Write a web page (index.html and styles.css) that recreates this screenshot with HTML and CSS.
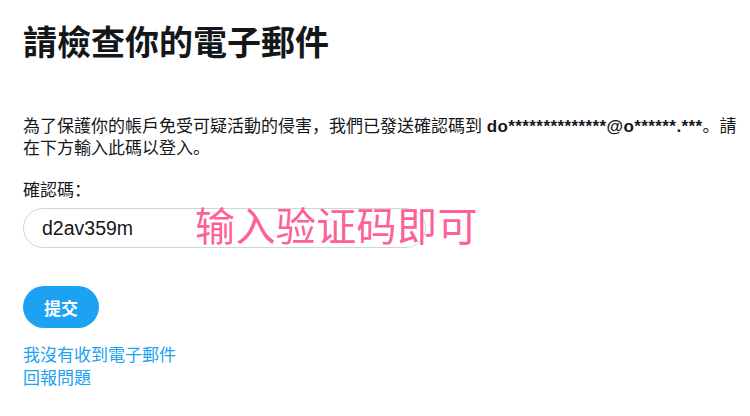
FILE: index.html
```html
<!DOCTYPE html>
<html lang="zh">
<head>
<meta charset="utf-8">
<link rel="stylesheet" href="styles.css">
</head>
<body>
<main class="page">
  <h1 class="title">請檢查你的電子郵件</h1>
  <p class="desc">為了保護你的帳戶免受可疑活動的侵害，我們已發送確認碼到 <strong>do**************@o******.***</strong>。請在下方輸入此碼以登入。</p>
  <form class="form">
    <label class="label" for="code">確認碼：</label>
    <div class="field">
      <input class="input" id="code" type="text" value="d2av359m">
      <span class="note">输入验证码即可</span>
    </div>
    <button class="submit" type="button">提交</button>
  </form>
  <nav class="links">
    <a class="link" href="#">我沒有收到電子郵件</a>
    <a class="link" href="#">回報問題</a>
  </nav>
</main>
</body>
</html>
```
FILE: styles.css
```css
html, body {
  margin: 0;
  padding: 0;
  background: #ffffff;
}
body {
  font-family: "Liberation Sans", "Noto Sans CJK SC", sans-serif;
  color: #14171a;
}
.page {
  padding: 23px 8px 0 23px;
  display: flex;
  flex-direction: column;
}
.title {
  margin: 0;
  font-size: 34px;
  line-height: 41px;
  font-weight: 700;
}
.desc {
  margin: 52px 0 0 0;
  font-size: 17px;
  line-height: 22px;
}
.desc strong {
  font-weight: 700;
  letter-spacing: 0.4px;
}
.form {
  margin-top: 20px;
  display: flex;
  flex-direction: column;
  align-items: flex-start;
}
.label {
  font-size: 17px;
  line-height: 22px;
}
.field {
  position: relative;
  margin-top: 6px;
}
.input {
  box-sizing: border-box;
  width: 403px;
  height: 40px;
  border: 1px solid #ccd6dd;
  border-radius: 20px;
  padding: 0 18px;
  font-family: "Liberation Sans", sans-serif;
  font-size: 19.5px;
  color: #14171a;
  background: #fff;
  outline: none;
}
.note {
  position: absolute;
  left: 172px;
  top: -4px;
  font-family: "Noto Sans CJK SC", sans-serif;
  font-size: 40px;
  line-height: 40px;
  letter-spacing: 0.4px;
  color: #fd6195;
  white-space: nowrap;
  pointer-events: none;
}
.submit {
  margin-top: 38px;
  width: 76px;
  height: 42px;
  border: none;
  border-radius: 21px;
  background: #1da1f2;
  color: #ffffff;
  font-family: "Liberation Sans", "Noto Sans CJK SC", sans-serif;
  font-size: 17px;
  font-weight: 700;
  padding: 0;
}
.links {
  margin-top: 16px;
  display: flex;
  flex-direction: column;
}
.link {
  font-size: 17px;
  line-height: 23px;
  color: #1da1f2;
  text-decoration: none;
  align-self: flex-start;
}
```
